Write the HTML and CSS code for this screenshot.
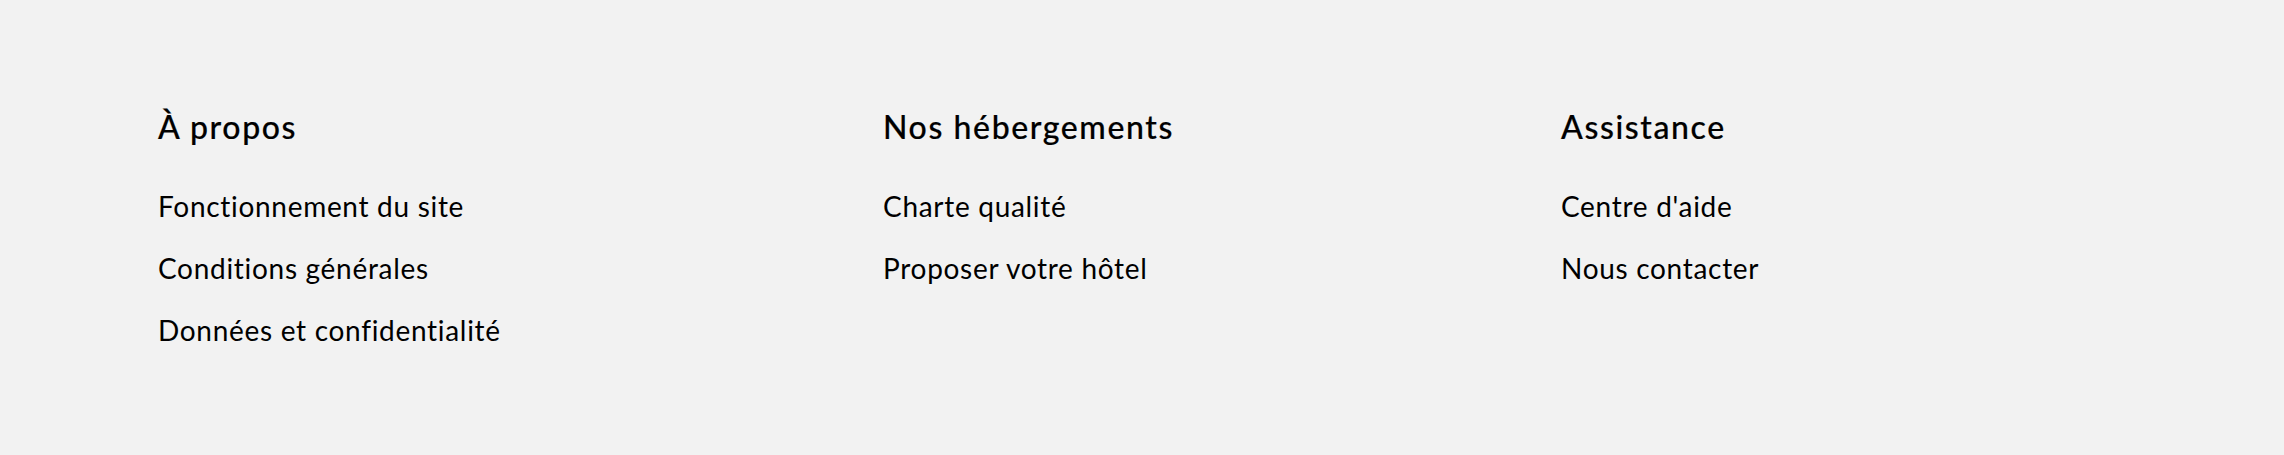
FILE: index.html
```html
<!DOCTYPE html>
<html lang="fr">
<head>
  <meta charset="UTF-8" />
  <meta name="viewport" content="width=device-width, initial-scale=1.0"/>
  <title>Footer</title>
  <link rel="stylesheet" href="styles.css">
</head>
<body>
  <footer class="site-footer">
    <div class="footer-col">
      <h3>À propos</h3>
      <ul>
        <li><a href="#">Fonctionnement du site</a></li>
        <li><a href="#">Conditions générales</a></li>
        <li><a href="#">Données et confidentialité</a></li>
      </ul>
    </div>
    <div class="footer-col">
      <h3>Nos hébergements</h3>
      <ul>
        <li><a href="#">Charte qualité</a></li>
        <li><a href="#">Proposer votre hôtel</a></li>
      </ul>
    </div>
    <div class="footer-col">
      <h3>Assistance</h3>
      <ul>
        <li><a href="#">Centre d'aide</a></li>
        <li><a href="#">Nous contacter</a></li>
      </ul>
    </div>
  </footer>
</body>
</html>
```

FILE: styles.css
```css
body {
  margin: 0;
  font-family: 'Lato', 'Open Sans', sans-serif;
  font-variant-ligatures: none;
  background-color: #f2f2f2;
  color: #000;
  height: 100vh;
}

.site-footer {
  display: grid;
  grid-template-columns: 725px 678px 1fr;
  padding: 102px 0 0 158px;
}

.footer-col h3 {
  margin: 0 0 23px;
  font-size: 32px;
  font-weight: 500;
  letter-spacing: 1.6px;
  line-height: 50px;
  -webkit-text-stroke: 0.2px #000;
}

.footer-col ul {
  list-style: none;
  margin: 0;
  padding: 0;
}

.footer-col li {
  line-height: 62px;
  font-size: 28px;
  letter-spacing: 0.7px;
}

.footer-col a {
  color: #000;
  text-decoration: none;
}
```
